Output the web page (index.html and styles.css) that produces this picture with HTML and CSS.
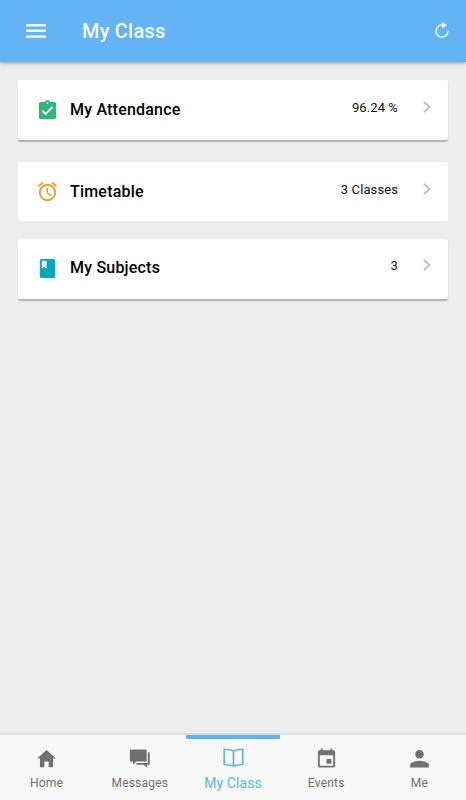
FILE: index.html
```
<!DOCTYPE html>
<html lang="en-US">

    <head>
        <meta charset="utf-8">
        <title>My Class</title>

        <link rel="stylesheet" href="styles.css">
    </head>

    <body>
        <header>
            <svg class="menuIcon" viewBox="0 0 20 14">
                <path d="M0 0h20v2.4H0zM0 5.6h20V8H0zM0 11.4h20v2.4H0z"/>
            </svg>
            <h1>My Class</h1>
            <svg class="refreshIcon" viewBox="0 0 14 16">
                <path class="ring" d="M7.2 3.1A6 6 0 1 0 13 9.3"/>
                <path d="M7 0l5.2 3.3L7 6.4z"/>
            </svg>
        </header>

        <main>
            <a class="card raised">
                <svg class="cardIcon green" viewBox="0 0 24 24">
                    <path d="M19 3h-4.18C14.4 1.84 13.3 1 12 1s-2.4.84-2.82 2H5c-1.1 0-2 .9-2 2v14c0 1.1.9 2 2 2h14c1.1 0 2-.9 2-2V5c0-1.1-.9-2-2-2zm-7 0c.55 0 1 .45 1 1s-.45 1-1 1-1-.45-1-1 .45-1 1-1zm-2 14l-4-4 1.41-1.41L10 14.17l6.59-6.59L18 9l-8 8z"/>
                </svg>
                <h2>My Attendance</h2>
                <span class="value">96.24 %</span>
                <svg class="chevron" viewBox="0 0 8 12"><path d="M1 .8L6.4 6 1 11.2"/></svg>
            </a>

            <a class="card flat">
                <svg class="cardIcon orange" viewBox="0 0 24 24">
                    <path d="M22 5.72l-4.6-3.86-1.29 1.53 4.6 3.86L22 5.72zM7.88 3.39L6.6 1.86 2 5.71l1.29 1.53 4.59-3.85zM12.5 8H11v6l4.75 2.85.75-1.23-4-2.37V8zM12 4c-4.97 0-9 4.03-9 9s4.02 9 9 9c4.97 0 9-4.03 9-9s-4.03-9-9-9zm0 16c-3.87 0-7-3.13-7-7s3.13-7 7-7 7 3.13 7 7-3.13 7-7 7z"/>
                </svg>
                <h2>Timetable</h2>
                <span class="value">3 Classes</span>
                <svg class="chevron" viewBox="0 0 8 12"><path d="M1 .8L6.4 6 1 11.2"/></svg>
            </a>

            <a class="card raised subjects">
                <svg class="cardIcon teal" viewBox="0 0 24 24">
                    <path d="M18 2H6c-1.1 0-2 .9-2 2v16c0 1.1.9 2 2 2h12c1.1 0 2-.9 2-2V4c0-1.1-.9-2-2-2zM6 4h5v8l-2.5-1.5L6 12V4z"/>
                </svg>
                <h2>My Subjects</h2>
                <span class="value">3</span>
                <svg class="chevron" viewBox="0 0 8 12"><path d="M1 .8L6.4 6 1 11.2"/></svg>
            </a>
        </main>

        <nav>
            <a class="tab">
                <svg viewBox="0 0 512 512">
                    <path d="M208 448V320h96v128h97.6V256H464L256 64 48 256h62.4v192z"/>
                </svg>
                <span>Home</span>
            </a>
            <a class="tab">
                <svg viewBox="0 0 24 24">
                    <path d="M1.9 2.6h17.6v12.6H8.7l-3.6 3.4v-3.4H1.9z"/>
                    <path d="M20.7 5.6h2v12.8h-2.8v3.2l-3.7-3.2H8.9v-1.7h11.8z"/>
                </svg>
                <span>Messages</span>
            </a>
            <a class="tab active">
                <svg viewBox="0 0 24 24">
                    <path class="outline" d="M12 5.2C9.2 3.9 5.8 3.4 2.3 3.4V19.3C5.8 19.3 9.2 19.8 12 21.1C14.8 19.8 18.2 19.3 21.7 19.3V3.4C18.2 3.4 14.8 3.9 12 5.2V21"/>
                </svg>
                <span>My Class</span>
            </a>
            <a class="tab">
                <svg viewBox="0 0 24 24">
                    <path d="M17 12.5h-5v5h5zM16 1.5v2H8v-2H6v2H5c-1.1 0-2 .9-2 2v14c0 1.1.9 2 2 2h14c1.1 0 2-.9 2-2v-14c0-1.1-.9-2-2-2h-1v-2zm3 18H5v-11h14z"/>
                </svg>
                <span>Events</span>
            </a>
            <a class="tab">
                <svg viewBox="0 0 512 512">
                    <path d="M256 256c52.8 0 96-43.2 96-96s-43.2-96-96-96-96 43.2-96 96 43.2 96 96 96zm0 48c-63.8 0-208 32.2-208 96v58h416v-58c0-63.8-144.2-96-208-96z"/>
                </svg>
                <span>Me</span>
            </a>
        </nav>
    </body>

</html>
```
FILE: styles.css
```
* {
    box-sizing: border-box;
}

body {
    display: flex;
    flex-direction: column;
    height: 100vh;
    margin: 0;

    font-family: Roboto, 'Liberation Sans', sans-serif;
    background-color: #ededed;
    color: #111111;
}

svg {
    display: block;
    flex: none;
    fill: currentColor;
}

header {
    display: flex;
    align-items: center;

    height: 62px;
    padding: 0 17px 0 26px;

    background-color: #64b3f5;
    color: #f3fdff;
    box-shadow: 0 1px 4px rgba(0, 0, 0, .4);
}

.menuIcon {
    width: 20px;
    height: 14px;
}

h1 {
    flex: 1;
    margin: 0 0 1px 36px;
    font-size: 20px;
    font-weight: 500;
    letter-spacing: .2px;
}

.refreshIcon {
    width: 14px;
    height: 16px;
    margin-bottom: 2px;
}

.ring {
    fill: none;
    stroke: currentColor;
    stroke-width: 1.5;
}

main {
    flex: 1;
    padding: 18px;
}

.card {
    display: flex;
    align-items: center;

    height: 60px;
    padding: 0 17px 0 18px;

    background-color: #ffffff;
    border-radius: 2px;
}

.raised {
    box-shadow: 0 2px 1px rgba(0, 0, 0, .24);
}

.flat {
    height: 59px;
    margin: 22px 0 18px;
}

.subjects {
    padding-bottom: 2px;
}

.cardIcon {
    width: 23px;
    height: 23px;
}

.green {
    color: #2fb577;
}

.orange {
    color: #e5a32e;
}

.teal {
    color: #07a7bd;
}

h2 {
    flex: 1;
    margin: 0 0 1px 11px;
    font-size: 16px;
    font-weight: 500;
    letter-spacing: .2px;
    color: #000000;
}

.value {
    margin: 0 25px 5px 0;
    font-size: 13px;
    letter-spacing: .1px;
}

.chevron {
    width: 8px;
    height: 12px;
    margin-bottom: 6px;

    fill: none;
    stroke: #b5b5b5;
    stroke-width: 1.6;
}

nav {
    display: flex;
    height: 67px;

    background-color: #f8f8f8;
    border-top: 2px solid #dddddd;
}

.tab {
    display: flex;
    flex: 1;
    flex-direction: column;
    align-items: center;

    padding-top: 12px;

    font-size: 12px;
    letter-spacing: .2px;
    color: #707070;
}

.tab svg {
    width: 23px;
    height: 23px;
}

.tab span {
    margin-top: 6px;
    line-height: 14px;
}

.active {
    padding-top: 8px;

    font-size: 14px;
    letter-spacing: .1px;
    color: #64b3e6;
    border-top: 4px solid #64b3ee;
}

.tab .outline {
    fill: none;
    stroke: currentColor;
    stroke-width: 1.8;
    stroke-linejoin: round;
}

.active svg {
    margin-top: -1px;
}

.active span {
    margin-top: 7px;
}
```
